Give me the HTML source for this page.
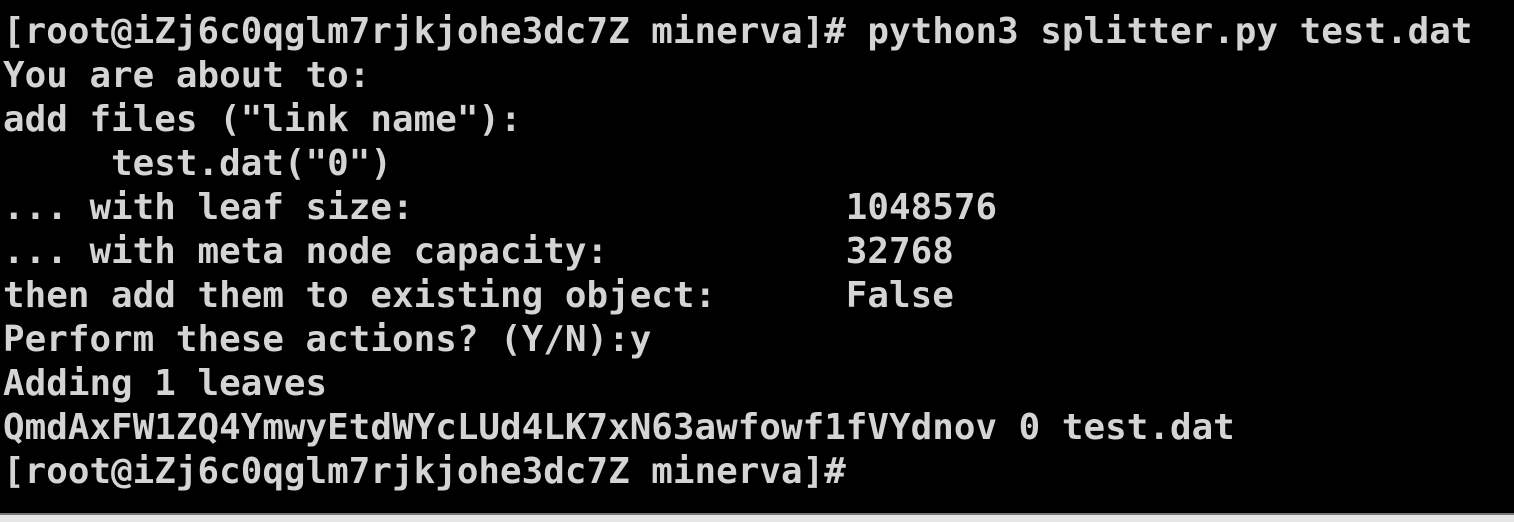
<!DOCTYPE html>
<html><head><meta charset="utf-8"><style>
body{margin:0;padding:0;background:#000;width:1514px;height:522px;overflow:hidden}
.wrap{width:1514px;height:513px;background:#000;overflow:hidden}
.t{margin:10px 0 0 3px;font-family:"DejaVu Sans Mono","Liberation Mono",monospace;font-weight:bold;font-size:35.85px;line-height:44px;color:#d4d4d4;white-space:pre;letter-spacing:0.04px}
.bar{width:1514px;height:2px;background:#777}
.bar2{width:1514px;height:7px;background:#e6e6e6}
</style></head><body>
<div class="wrap"><div class="t">[root@iZj6c0qglm7rjkjohe3dc7Z minerva]# python3 splitter.py test.dat
You are about to:
add files ("link name"):
     test.dat("0")
... with leaf size:                    1048576
... with meta node capacity:           32768
then add them to existing object:      False
Perform these actions? (Y/N):y
Adding 1 leaves
QmdAxFW1ZQ4YmwyEtdWYcLUd4LK7xN63awfowf1fVYdnov 0 test.dat
[root@iZj6c0qglm7rjkjohe3dc7Z minerva]#</div></div>
<div class="bar"></div><div class="bar2"></div>
</body></html>
